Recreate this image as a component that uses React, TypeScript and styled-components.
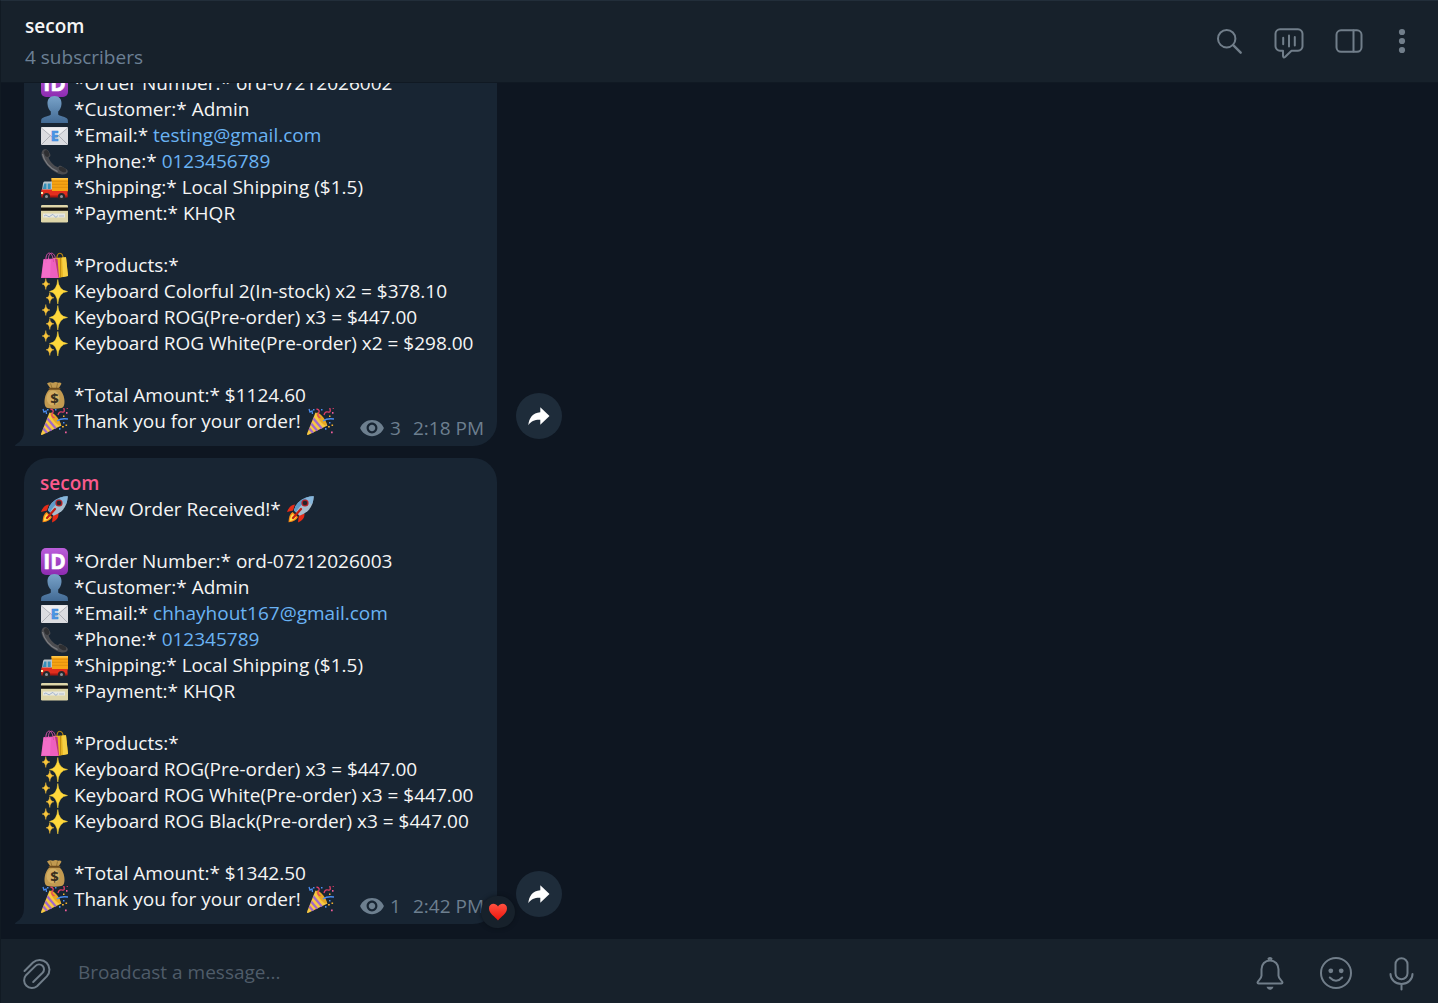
import React from "react";
import styled, { createGlobalStyle } from "styled-components";

const color = {
  canvas: "#0e1621",
  bar: "#17212b",
  bubble: "#182533",
  text: "#f5f5f5",
  subtitle: "#6c8095",
  muted: "#6d7f8f",
  icon: "#717e8a",
  link: "#6ab3f3",
  name: "#fb5a8c",
};

const GlobalStyle = createGlobalStyle`
  *, *::before, *::after { box-sizing: border-box; }
  body {
    margin: 0;
    background: ${color.canvas};
    color: ${color.text};
    font: 400 19px/26px "Open Sans", "Noto Sans", sans-serif;
  }
  button, input { font: inherit; color: inherit; }
`;

const Page = styled.div`
  display: flex;
  flex-direction: column;
  height: 100vh;
  border-top: 1px solid #222e3a;
  border-left: 1px solid #111a23;
`;

const Header = styled.header`
  display: flex;
  align-items: center;
  justify-content: space-between;
  flex: none;
  padding: 12px 27px 12px 24px;
  background: ${color.bar};
  border-bottom: 1px solid #101923;
`;

const Titles = styled.div`
  display: flex;
  flex-direction: column;
  gap: 5px;
`;

const Title = styled.h1`
  margin: 0;
  font-size: 19px;
  line-height: 26px;
  font-weight: 600;
`;

const Subtitle = styled.p`
  margin: 0;
  color: ${color.subtitle};
`;

const Actions = styled.div<{ $gap: number }>`
  display: flex;
  align-items: center;
  gap: ${(p) => p.$gap}px;
`;

const HeaderActions = styled(Actions)`
  padding-bottom: 1px;
`;

const IconButton = styled.button<{ $width: number; $height: number }>`
  flex: none;
  width: ${(p) => p.$width}px;
  height: ${(p) => p.$height}px;
  padding: 0;
  border: 0;
  background: none;
  color: ${color.icon};
  cursor: pointer;

  svg {
    display: block;
    width: 100%;
    height: 100%;
    overflow: visible;
    fill: none;
    stroke: currentColor;
    stroke-width: 2;
    stroke-linecap: round;
    stroke-linejoin: round;
  }
`;

const History = styled.main`
  display: flex;
  flex: 1;
  flex-direction: column;
  justify-content: flex-end;
  gap: 12px;
  min-height: 0;
  overflow: hidden;
  padding: 0 23px 15px;
`;

const MessageRow = styled.article`
  display: flex;
  flex: none;
  align-items: flex-end;
  gap: 19px;
`;

const Bubble = styled.div`
  position: relative;
  min-width: 473px;
  padding: 12px 13px 5px 16px;
  border-radius: 24px 24px 24px 0;
  background: ${color.bubble};
`;

const Tail = styled.svg`
  position: absolute;
  right: 100%;
  bottom: 0;
  width: 9px;
  height: 16px;
  fill: ${color.bubble};
`;

const Author = styled.div`
  color: ${color.name};
  font-weight: 600;
`;

const Line = styled.div`
  min-height: 26px;
  padding-right: 3px;
  white-space: pre;
`;

const LastRow = styled.div`
  display: flex;
  align-items: flex-end;
  justify-content: space-between;
`;

const Closing = styled(Line)`
  margin-bottom: 7px;
`;

const Link = styled.a`
  color: ${color.link};
  text-decoration: none;
`;

const EmojiSvg = styled.svg`
  display: inline-block;
  width: 27px;
  height: 27px;
  margin: 0 1px -1px;
  vertical-align: top;
  font-family: "Open Sans", sans-serif;
  font-weight: 700;
`;

const Meta = styled.div`
  display: flex;
  align-items: center;
  gap: 12px;
  color: ${color.muted};
`;

const Views = styled.span`
  display: flex;
  align-items: center;
  gap: 5px;

  svg {
    width: 26px;
    height: 26px;
    fill: currentColor;
  }
`;

const Reaction = styled.button`
  position: absolute;
  right: -18px;
  bottom: -4px;
  display: flex;
  align-items: center;
  justify-content: center;
  width: 34px;
  height: 32px;
  padding: 0;
  border: 0;
  border-radius: 16px;
  background: ${color.bar};
  box-shadow: 0 0 4px rgba(8, 14, 22, 0.7);

  svg {
    width: 18px;
    height: 18px;
  }
`;

const ShareButton = styled.button`
  flex: none;
  width: 46px;
  height: 46px;
  margin-bottom: 7px;
  padding: 0;
  border: 0;
  border-radius: 50%;
  background: #1e2c3a;

  svg {
    display: block;
    fill: #fff;
  }
`;

const Composer = styled.form`
  display: flex;
  align-items: center;
  flex: none;
  height: 64px;
  padding: 2px 18px 0 17px;
  background: ${color.bar};
`;

const MessageInput = styled.input`
  flex: 1;
  min-width: 0;
  height: 40px;
  padding: 0 24px;
  border: 0;
  outline: 0;
  background: none;

  &::placeholder {
    color: #4f5c69;
    opacity: 1;
  }
`;

type EmojiName =
  | "id" | "person" | "email" | "phone" | "truck" | "card"
  | "bags" | "sparkles" | "money" | "party" | "rocket";

const emojiArt: Record<EmojiName, React.ReactNode> = {
  id: (
    <>
      <rect width="27" height="27" rx="5" fill="url(#gPurple)" />
      <text x="13.5" y="21" fontSize="21" textAnchor="middle" fill="#fff" stroke="#fff" strokeWidth=".6">ID</text>
    </>
  ),
  person: (
    <path
      fill="url(#gPerson)"
      d="M13.5 0c4.700 0 7.300 3.200 7 8-.2 3.500-1.700 6-3.300 7.600v3c.3 1.500 8.600 2 9.600 5.200L27 27H0l.2-3.200c1-3.200 9.300-3.700 9.600-5.200v-3C8.200 14 6.700 11.500 6.500 8c-.3-4.800 2.300-8 7-8z"
    />
  ),
  email: (
    <>
      <rect y="5" width="27" height="18" rx="1" fill="#dcdde1" />
      <path d="M0 23l10-10M27 23L17 13M0 5.500l11 9.500q2.500 2 5 0L27 5.500" fill="none" stroke="#a9acb3" strokeWidth=".9" />
      <path d="M.5 5.500h26L15.500 14.500q-2 1.500-4 0z" fill="#eeeef0" />
      <text x="13.600" y="19" fontSize="14" textAnchor="middle" fill="#4c9bea" stroke="#3b82d6" strokeWidth=".7">E</text>
    </>
  ),
  phone: (
    <>
      <path
        d="M1.500 2.500C3 .5 6 .8 7.500 3l1.700 3.200c.6 1.500-.2 2.400-1.600 3.300 1.200 4 5 8.300 9.200 9.800 1-1.300 2-2 3.400-1.300l5 3c2 1.200 2 3.400.5 4.500-2.200 1.500-6 1.300-9.700-.5C9 21.500 2.500 14 .8 8.200.2 6 .5 4 1.500 2.500z"
        fill="#4b4c50"
      />
      <path d="M1.600 6c1.200 7 7.400 14.700 15 17.600" fill="none" stroke="#7b7d82" strokeWidth="1.300" />
      <ellipse cx="5.700" cy="5.500" rx="2.400" ry="3.500" transform="rotate(-20 5.700 5.500)" fill="#2e2f32" />
      <ellipse cx="21.500" cy="21.500" rx="4" ry="2.200" transform="rotate(28 21.500 21.500)" fill="#2e2f32" />
    </>
  ),
  truck: (
    <>
      <rect x="10.500" y="4" width="16.500" height="13.500" rx=".7" fill="#f6a312" />
      <path d="M11 7.300h16M11 10.300h16M11 13.300h16" stroke="#d98a0c" strokeWidth=".8" />
      <rect x="10.500" y="4" width="16.500" height="1.700" fill="#ffc545" />
      <path d="M3.500 7.500H11v10H.8L2 9.500q.3-2 1.500-2z" fill="#b9c4ca" />
      <path d="M3.300 9.500h2.200V15H1.800zM6.700 9.500h3V15h-3z" fill="#368fb8" />
      <path d="M.3 15.500H11v1.500h15.500v5.500H.3z" fill="#e22f1e" />
      <path d="M.3 21.500h26.200v2H.3z" fill="#a91912" />
      <path d="M0 18h2v2H0z" fill="#fff2b0" />
      <circle cx="5.500" cy="22.500" r="3.600" fill="#26282c" />
      <circle cx="20.500" cy="22.500" r="3.600" fill="#26282c" />
      <circle cx="5.500" cy="22.500" r="1.500" fill="#8f969c" />
      <circle cx="20.500" cy="22.500" r="1.500" fill="#8f969c" />
    </>
  ),
  card: (
    <>
      <rect y="5" width="27" height="17.500" rx="1.200" fill="#ded6a9" />
      <path d="M0 7.500h27v3.300H0z" fill="#15130e" />
      <path d="M2 13.500h22v4H2z" fill="#e6e8e2" />
      <path d="M3 16q2-2 3.500 0t3.500-.5 3.500.5 3-.5" fill="none" stroke="#8fa5c9" strokeWidth=".8" />
      <path d="M18 16h5" stroke="#b3bccb" strokeWidth="1" />
    </>
  ),
  bags: (
    <>
      <path d="M16 8c-1-9 6-9 6.500 0" fill="none" stroke="#b68512" strokeWidth="1.100" />
      <path d="M12 6l13-.8L27 24l-10 2z" fill="#e8b421" />
      <path d="M21 5.500l4-.3L27 24l-5 1z" fill="#f6cf43" />
      <path d="M19.500 6v19" stroke="#b98510" strokeWidth=".8" />
      <path d="M2.500 7L14 6.500 17.500 26 0 26z" fill="#ee5fc0" />
      <path d="M14 6.500l2.500.5 1.500 18-.5 1z" fill="#b82e89" />
      <path d="M5 11C3.500-2 12-2 12.500 10M7.500 7c0-8 6-7.500 7 0" fill="none" stroke="#d94fa9" strokeWidth="1" />
      <path d="M2.500 8L1 25h8l1-17z" fill="#f678cf" opacity=".6" />
    </>
  ),
  sparkles: (
    <>
      <path d="M16.800 1.500Q17.500 12.600 26.500 13.500 17.500 14.400 16.800 26 16.100 14.400 8.500 13.500 16.100 12.600 16.800 1.500z" fill="#ffd83b" stroke="#ffd83b" strokeWidth=".5" />
      <path d="M4.800.5Q5.200 5.500 9 6 5.200 6.500 4.800 11.500 4.400 6.500 1 6 4.400 5.500 4.800.5z" fill="#f9c53a" stroke="#f9c53a" strokeWidth=".4" />
      <path d="M8.800 14.500Q9.200 19.300 13 19.800 9.200 20.300 8.800 25.500 8.400 20.300 5 19.800 8.400 19.300 8.800 14.500z" fill="#f9c53a" stroke="#f9c53a" strokeWidth=".4" />
    </>
  ),
  money: (
    <>
      <path d="M9.500 6.500L6 1.500Q9-.8 12 .8 15-.8 17 .8q2.500-1 3.500 1L17.500 6.500q5 4 5.800 10.500 1 8-3 9-7 1.500-13.600 0-4-1-3-9Q4.500 10.500 9.500 6.500z" fill="#c29a50" />
      <path d="M9.500 1.500l1.500 4.500M16.500 1.500L15.500 6" stroke="#8a6a2c" strokeWidth=".8" />
      <path d="M8.500 6.800h10" stroke="#6f4c1c" strokeWidth="1.900" strokeLinecap="round" />
      <ellipse cx="12" cy="16" rx="6.500" ry="7.500" fill="#dcb96d" opacity=".65" />
      <text x="13.500" y="22.300" fontSize="15" textAnchor="middle" fill="#39301f">$</text>
    </>
  ),
  party: (
    <>
      <path d="M8.500 4.500Q15 7 20.500 17.500L1 27Q-.5 27 .3 25z" fill="#f7c843" />
      <path d="M5.900 11.700l7.900 9.200 2-1L6.900 9.300zM3.800 16.900l5.400 6.300 2-1-6.400-7.600zM1.800 21.800l3.200 3.500 2-1-4.200-5z" fill="#a269c8" />
      <ellipse cx="14.500" cy="11" rx="2.400" ry="8" transform="rotate(-38 14.500 11)" fill="#e6a724" />
      <path d="M2 1l1 3 2-1 .5 3M16 13q4-3 11-2" fill="none" stroke="#4b8df0" strokeWidth="1.300" />
      <path d="M9.500 1q4 1 2 4t2 5M17 7q1-4 4-3t2-3 4-.5" fill="none" stroke="#e23f68" strokeWidth="1.300" />
      <path d="M6 1h1.500v1.500H6zM14 1h1.500v1.500H14zM22 14h1.500v1.500H22zM18 20h1.500v1.800H18z" fill="#4b8df0" />
      <path d="M25 4h1.500v1.700H25zM24 23.500h1.700v1.700H24z" fill="#ef5d9b" />
      <path d="M21 18h1.800v1.500H21zM24.500 16.500h1.600V18h-1.600zM22 7.500h1.500V9H22z" fill="#f3b22f" />
    </>
  ),
  rocket: (
    <>
      <path d="M8 8.500Q2.500 9 0 16l6-1.500zM17.500 17.500q.5 6.500-6.500 9l.8-7z" fill="#e52b17" />
      <path d="M5.500 16q-3.500 2-4 10.300Q9 25.500 11 21z" fill="#f98b16" />
      <path d="M5.700 18q-2.500 2-3 7 5-.5 6.500-4z" fill="#ffe14a" />
      <path d="M26.700.3Q17 .5 11 6.800 7.500 10.500 7 14.500l5.500 5.300q5-2 8-4.500Q26.500 9.500 26.700.3z" fill="#a8bdcd" />
      <path d="M26.700.3Q17 .5 11 6.800 7.500 10.500 7 14.500l2 2Q12 9 26.700.3z" fill="#5e9ac8" />
      <path d="M26.700.3q-5 .1-8.700 1.900l6.700 6.500q1.900-4 2-8.400z" fill="#86b6dc" />
      <circle cx="18" cy="7" r="3.600" fill="#b3242a" />
      <circle cx="18" cy="7" r="2.300" fill="#26252c" />
      <path d="M14 13l-8 9" stroke="#c41f13" strokeWidth="2.200" strokeLinecap="round" />
    </>
  ),
};

const Emoji = ({ name }: { name: EmojiName }) => (
  <EmojiSvg viewBox="0 0 27 27" role="img" aria-label={name}>{emojiArt[name]}</EmojiSvg>
);

const SharedGradients = styled.svg`
  position: absolute;
  width: 0;
  height: 0;
`;

type Order = {
  author?: string;
  number: string;
  email: string;
  phone: string;
  products: string[];
  total: string;
  views: number;
  time: string;
  liked?: boolean;
};

const orders: Order[] = [
  {
    number: "ord-07212026002",
    email: "testing@gmail.com",
    phone: "0123456789",
    products: [
      "Keyboard Colorful 2(In-stock) x2 = $378.10",
      "Keyboard ROG(Pre-order) x3 = $447.00",
      "Keyboard ROG White(Pre-order) x2 = $298.00",
    ],
    total: "$1124.60",
    views: 3,
    time: "2:18 PM",
  },
  {
    author: "secom",
    number: "ord-07212026003",
    email: "chhayhout167@gmail.com",
    phone: "012345789",
    products: [
      "Keyboard ROG(Pre-order) x3 = $447.00",
      "Keyboard ROG White(Pre-order) x3 = $447.00",
      "Keyboard ROG Black(Pre-order) x3 = $447.00",
    ],
    total: "$1342.50",
    views: 1,
    time: "2:42 PM",
    liked: true,
  },
];

const Message = ({ order }: { order: Order }) => (
  <MessageRow>
    <Bubble>
      <Tail viewBox="0 0 9 16" aria-hidden="true">
        <path d="M9 0v16H.5Q-.5 15.500.5 14.800 9 10 9 0z" />
      </Tail>
      {order.author && (
        <>
          <Author>{order.author}</Author>
          <Line><Emoji name="rocket" /> *New Order Received!* <Emoji name="rocket" /></Line>
          <Line />
        </>
      )}
      <Line><Emoji name="id" /> *Order Number:* {order.number}</Line>
      <Line><Emoji name="person" /> *Customer:* Admin</Line>
      <Line><Emoji name="email" /> *Email:* <Link href={`mailto:${order.email}`}>{order.email}</Link></Line>
      <Line><Emoji name="phone" /> *Phone:* <Link href={`tel:${order.phone}`}>{order.phone}</Link></Line>
      <Line><Emoji name="truck" /> *Shipping:* Local Shipping ($1.5)</Line>
      <Line><Emoji name="card" /> *Payment:* KHQR</Line>
      <Line />
      <Line><Emoji name="bags" /> *Products:*</Line>
      {order.products.map((product) => (
        <Line key={product}><Emoji name="sparkles" /> {product}</Line>
      ))}
      <Line />
      <Line><Emoji name="money" /> *Total Amount:* {order.total}</Line>
      <LastRow>
        <Closing><Emoji name="party" /> Thank you for your order! <Emoji name="party" /></Closing>
        <Meta>
          <Views>
            <svg viewBox="0 0 24 24" aria-hidden="true">
              <path d="M12 4.500C7 4.500 2.730 7.610 1 12c1.730 4.390 6 7.500 11 7.500s9.270-3.110 11-7.500c-1.730-4.390-6-7.500-11-7.500zM12 17c-2.760 0-5-2.240-5-5s2.240-5 5-5 5 2.240 5 5-2.240 5-5 5zm0-8c-1.660 0-3 1.340-3 3s1.340 3 3 3 3-1.340 3-3-1.340-3-3-3z" />
            </svg>
            {order.views}
          </Views>
          <time>{order.time}</time>
        </Meta>
      </LastRow>
      {order.liked && (
        <Reaction type="button" aria-label="Heart reaction">
          <svg viewBox="0 0 18 18" aria-hidden="true">
            <path d="M9 17.500C6 13.500 0 11 0 5.300 0 .2 6.500-.8 9 3.500 11.500-.8 18 .2 18 5.300 18 11 12 13.500 9 17.500z" fill="url(#gHeart)" />
          </svg>
        </Reaction>
      )}
    </Bubble>
    <ShareButton type="button" aria-label="Share message">
      <svg width="46" height="46" viewBox="0 0 46 46" aria-hidden="true">
        <path d="M24.300 14.300l9.200 8.600-9.200 8.900v-5c-5.800-.2-9 1.500-12 5.400.7-7.200 4.200-12.200 12-13z" />
      </svg>
    </ShareButton>
  </MessageRow>
);

export default function App() {
  return (
    <Page>
      <GlobalStyle />
      <SharedGradients aria-hidden="true">
        <defs>
          <linearGradient id="gPurple" x1="0" y1="0" x2="0" y2="1">
            <stop offset="0" stopColor="#bb5edb" />
            <stop offset="1" stopColor="#8d2bb0" />
          </linearGradient>
          <linearGradient id="gPerson" x1="0" y1="0" x2="0" y2="1">
            <stop offset="0" stopColor="#79a3c9" />
            <stop offset="1" stopColor="#426a94" />
          </linearGradient>
          <linearGradient id="gHeart" x1="0" y1="0" x2="0" y2="1">
            <stop offset="0" stopColor="#ff5140" />
            <stop offset="1" stopColor="#ee130c" />
          </linearGradient>
        </defs>
      </SharedGradients>
      <Header>
        <Titles>
          <Title>secom</Title>
          <Subtitle>4 subscribers</Subtitle>
        </Titles>
        <HeaderActions $gap={28}>
          <IconButton type="button" aria-label="Search" $width={32} $height={32}>
            <svg viewBox="0 0 32 32">
              <circle cx="13.700" cy="13.700" r="8.700" />
              <path d="M20.200 20.200l7.500 7.500" strokeWidth="2.400" />
            </svg>
          </IconButton>
          <IconButton type="button" aria-label="Live stream" $width={32} $height={32}>
            <svg viewBox="0 0 32 32">
              <path d="M7 4.300h18a4.500 4.500 0 0 1 4.500 4.500v12.400a4.500 4.500 0 0 1-4.500 4.500h-6.500L12 32c-1 .8-2 .4-2-.9v-5.400H7a4.500 4.500 0 0 1-4.500-4.500V8.800A4.500 4.500 0 0 1 7 4.300z" />
              <path d="M10.200 12.800v6.500M16 10.500v11M21.800 12v8.500" />
            </svg>
          </IconButton>
          <IconButton type="button" aria-label="Toggle side panel" $width={32} $height={32}>
            <svg viewBox="0 0 32 32">
              <rect x="3.500" y="5.300" width="25" height="21.500" rx="4.500" />
              <path d="M20.500 5.500v21" />
            </svg>
          </IconButton>
          <IconButton type="button" aria-label="More" $width={18} $height={32}>
            <svg viewBox="0 0 18 32">
              <g fill="currentColor" stroke="none">
                <circle cx="9" cy="7" r="3.100" />
                <circle cx="9" cy="16" r="3.100" />
                <circle cx="9" cy="25" r="3.100" />
              </g>
            </svg>
          </IconButton>
        </HeaderActions>
      </Header>
      <History>
        {orders.map((order) => (
          <Message key={order.number} order={order} />
        ))}
      </History>
      <Composer>
        <IconButton type="button" aria-label="Attach file" $width={36} $height={36}>
          <svg viewBox="0 0 36 36">
            <path d="M6.500 17L15 8.500A9.800 9.800 0 0 1 28.800 22.400L19 32.200A7.800 7.800 0 0 1 8 21.200L17.500 11.900A4.900 4.900 0 0 1 24.600 18.800L15.200 28" />
          </svg>
        </IconButton>
        <MessageInput type="text" aria-label="Message" placeholder="Broadcast a message..." />
        <Actions $gap={30}>
          <IconButton type="button" aria-label="Notifications" $width={36} $height={36}>
            <svg viewBox="0 0 36 36">
              <path d="M18 6.500c-5 0-8.500 3.800-8.500 8.800v6.500c0 3-4 5-4 6.700 0 .7.500 1 1.200 1h22.600c.7 0 1.200-.3 1.200-1 0-1.700-4-3.700-4-6.700v-6.500c0-5-3.500-8.800-8.500-8.800z" />
              <path d="M16.800 4.800q1.200-1 2.400 0" strokeWidth="2.500" />
              <path d="M14.500 32.800h7q-1 3-3.500 3t-3.500-3z" fill="currentColor" stroke="none" />
            </svg>
          </IconButton>
          <IconButton type="button" aria-label="Emoji" $width={36} $height={36}>
            <svg viewBox="0 0 36 36">
              <circle cx="18" cy="19" r="15" />
              <path d="M11.800 23.500q6.200 6.500 12.400 0" />
              <circle cx="12.800" cy="16.800" r="2.400" fill="currentColor" stroke="none" />
              <circle cx="23.200" cy="16.800" r="2.400" fill="currentColor" stroke="none" />
            </svg>
          </IconButton>
          <IconButton type="button" aria-label="Record voice message" $width={36} $height={36}>
            <svg viewBox="0 0 36 36">
              <rect x="11.500" y="4.300" width="12" height="21" rx="6" />
              <path d="M6.500 20c0 5.500 4.500 10 11 10s11-4.500 11-10M17.500 30v5.500" />
            </svg>
          </IconButton>
        </Actions>
      </Composer>
    </Page>
  );
}
